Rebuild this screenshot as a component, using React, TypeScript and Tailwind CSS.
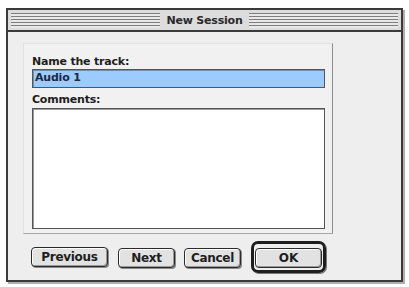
import React from 'react';

const font = { fontFamily: '"DejaVu Sans", Verdana, sans-serif' };

function MacButton({ label, width }: { label: string; width: string }) {
  return (
    <button
      className={`${width} h-[20px] rounded-[4px] border border-[#2a2a2a] bg-[#e2e2e2] text-[12px] font-bold tracking-[-0.3px] text-[#1e1e1e] shadow-[inset_-1px_-1px_0_#9a9a9a,inset_1px_1px_0_#ffffff,1px_1px_0_#8a8a8a]`}
    >
      {label}
    </button>
  );
}

export default function App() {
  return (
    <div className="h-[287px] w-[409px] overflow-hidden bg-white" style={font}>
      <div className="ml-[6px] mt-[8px] h-[274px] w-[397px] border-2 border-[#3a3a3a] bg-[#eeeeee] shadow-[2px_2px_0_#b0b0b0]">
        {/* title bar */}
        <div className="flex h-[22px] items-center border-b-2 border-[#3a3a3a] bg-[#dcdcdc] px-[3px]">
          <div className="h-[15px] flex-1 bg-[repeating-linear-gradient(to_bottom,#7e7e7e_0px,#7e7e7e_1px,#e8e8e8_1px,#e8e8e8_3px)]" />
          <div className="px-[6px] text-[11px] font-bold leading-none tracking-[-0.2px] text-[#2a2a2a]">New Session</div>
          <div className="h-[15px] flex-1 bg-[repeating-linear-gradient(to_bottom,#7e7e7e_0px,#7e7e7e_1px,#e8e8e8_1px,#e8e8e8_3px)]" />
        </div>

        <div className="pl-[15px] pt-[11px]">
          {/* panel */}
          <div className="h-[191px] w-[310px] border border-[#e2e2e2] border-r-[#8e8e8e] border-b-[#a8a8a8] bg-[#f1f1f1] px-[8px] pt-[11px]">
            <div className="text-[11px] font-bold leading-[13px] tracking-[-0.2px] text-[#1e1e1e]">Name the track:</div>
            <div className="mt-[1px] flex h-[19px] w-[293px] items-center border border-[#555] bg-[#9ccbff] px-[2px] text-[11px] font-bold tracking-[-0.2px] text-[#1a2a44] shadow-[inset_1px_1px_0_#6f8fb0]">
              Audio 1
            </div>
            <div className="mt-[5px] text-[11px] font-bold leading-[13px] tracking-[-0.2px] text-[#1e1e1e]">Comments:</div>
            <div className="mt-[2px] h-[121px] w-[293px] border border-[#555] bg-white shadow-[inset_1px_1px_0_#9a9a9a]" />
          </div>

          {/* buttons */}
          <div className="mt-[7px] flex items-center pl-[8px]">
            <MacButton label="Previous" width="w-[77px]" />
            <div className="ml-[10px]">
              <MacButton label="Next" width="w-[57px]" />
            </div>
            <div className="ml-[9px]">
              <MacButton label="Cancel" width="w-[57px]" />
            </div>
            <div className="ml-[10px] rounded-[7px] border-[3px] border-[#1e1e1e] p-[1px] shadow-[1px_1px_0_#777]">
              <button className="h-[20px] w-[67px] rounded-[4px] border border-[#2a2a2a] bg-[#e2e2e2] text-[12px] font-bold text-[#1e1e1e] shadow-[inset_-1px_-1px_0_#9a9a9a,inset_1px_1px_0_#ffffff]">
                OK
              </button>
            </div>
          </div>
        </div>
      </div>
    </div>
  );
}
